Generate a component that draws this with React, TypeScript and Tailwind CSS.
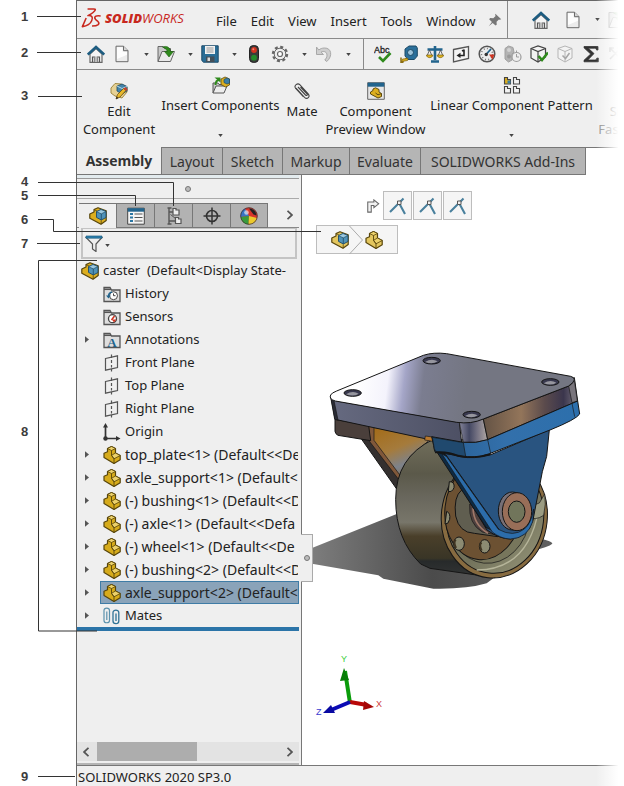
import React from "react";
import { clsx } from "clsx";

type Glyph = () => React.ReactElement;

function Svg({ children, size = "size-[18px]" }: { children: React.ReactNode; size?: string }) {
  return (
    <svg viewBox="0 0 18 18" className={clsx("block shrink-0", size)} fill="none" aria-hidden="true">
      {children}
    </svg>
  );
}

/* ---------- toolbar glyphs ---------- */

const Home: Glyph = () => (
  <Svg>
    <path d="M3 9 9 3.5 15 9v8.3H3z" fill="#f4f4f4" stroke="#666" strokeWidth="1.2" />
    <path d="M5.5 17v-5h2v5M10.500 17v-5h2v5" stroke="#555" strokeWidth="1.2" />
    <path d="M7.500 11.500h3v5.500h-3z" fill="#bbb" />
    <path d="M.8 9.600 9 2l8.200 7.600" stroke="#1d5c80" strokeWidth="2.600" />
  </Svg>
);
const Doc: Glyph = () => (
  <Svg>
    <path d="M3 1.200h7.500L15 5.700v11H3z" fill="#ececec" stroke="#6b6b6b" />
    <path d="M4 2.200h5.500v4.500H14v3L4 14z" fill="#fdfdfd" />
    <path d="M10.500 1.200v4.500H15" fill="#d6d6d6" stroke="#6b6b6b" />
  </Svg>
);
const Open: Glyph = () => (
  <Svg>
    <path d="M1 16.500V1.500h5l1.500 2h6v4" fill="#c9c9c9" stroke="#666" />
    <path d="M1 16.500 5 6.500h12.500l-4 10z" fill="#e9e9e9" stroke="#666" />
    <path d="M5.500 2c4-1.500 7.500 0 8 4.500h3L12 12 7.500 6.500h2.700C10 4.300 8 3.200 5.500 2z" fill="#2f8a1c" stroke="#1b5c0e" strokeWidth=".6" />
  </Svg>
);
const Save: Glyph = () => (
  <Svg>
    <path d="M.8.8h16.400v16.400H2.500L.8 15.500z" fill="#2a6d96" stroke="#1c4a68" />
    <path d="M4 1h10v8H4z" fill="#f2f2f2" />
    <path d="M5.500 3h7M5.500 5h7M5.500 7h7" stroke="#999" />
    <path d="M5 11.500h8.500V17H5z" fill="#444f58" />
    <path d="M6.500 12.500h2.500V16H6.500z" fill="#dadada" />
  </Svg>
);
const Traffic: Glyph = () => (
  <Svg>
    <rect x="4.500" y=".5" width="9" height="17" rx="4" fill="#3a3a3a" stroke="#222" />
    <circle cx="9" cy="5" r="2.900" fill="#d2331f" />
    <circle cx="9" cy="12.700" r="2.900" fill="#238a2a" />
    <circle cx="8.300" cy="4.300" r="1" fill="#f08a7a" />
  </Svg>
);
const Gear: Glyph = () => (
  <Svg>
    <circle cx="9" cy="9" r="7" stroke="#666" strokeWidth="2.400" strokeDasharray="3 2.500" />
    <circle cx="9" cy="9" r="5.800" fill="#ececec" stroke="#666" />
    <circle cx="9" cy="9" r="2.500" fill="#fff" stroke="#666" strokeWidth="1.200" />
  </Svg>
);
const Undo: Glyph = () => (
  <Svg>
    <path d="M1.500 2v7.500h7L6 7.200c3-1.700 6-.2 6 3 0 2-1 3.500-2.200 4.800l2 1.500C18 11 16.500 2.800 9.500 3 7 3 5.300 3.800 3.800 5z" fill="#cfcfcf" stroke="#a8a8a8" />
  </Svg>
);
const Spell: Glyph = () => (
  <Svg>
    <text x="0" y="8" fontSize="9" fontFamily="Liberation Sans, Arial, sans-serif" fill="#222" stroke="#222" strokeWidth=".3">Abc</text>
    <path d="m5 12 4 4 7.500-8" stroke="#2f8a1c" strokeWidth="2.600" />
  </Svg>
);
const Tape: Glyph = () => (
  <Svg>
    <path d="M5 4 9 1h7l1.300 2v8l-3 3.500H8L5 11z" fill="#2b6f9a" stroke="#1d4a66" />
    <circle cx="10.500" cy="7.500" r="3" fill="#9cc3da" stroke="#1d4a66" />
    <path d="M7 13 2 17M1 12.500v5h2.500" stroke="#8a6d12" strokeWidth="1.500" />
    <path d="m8 13.500-5.500.5-1 2.500 6-1z" fill="#e1b51c" stroke="#7c6010" strokeWidth=".7" />
  </Svg>
);
const Scales: Glyph = () => (
  <Svg>
    <path d="M9 1v14M1.500 4.500h15M5 16.500h8" stroke="#22648d" strokeWidth="2.600" />
    <path d="m3.500 5-2.500 6M3.500 5 6 11M14.500 5 12 11M14.500 5l2.500 6" stroke="#555" strokeWidth=".9" />
    <path d="M.5 10h6.300c0 3.500-6.300 3.500-6.300 0zM11.200 10h6.300c0 3.500-6.300 3.500-6.300 0z" fill="#e1b51c" stroke="#7c6010" strokeWidth=".7" />
  </Svg>
);
const Section: Glyph = () => (
  <Svg>
    <path d="M1.500 4.500 16.500 1.500v12l-15 3.500z" fill="#f3f3f3" stroke="#555" strokeWidth="1.300" />
    <path d="M12 4.500v6H7M12 5l-2 1" stroke="#222" strokeWidth="1.600" />
    <path d="m8.500 7.800-4 2.800 4 2.500z" fill="#222" />
  </Svg>
);
const Gauge: Glyph = () => (
  <Svg>
    <circle cx="9" cy="9" r="7.800" fill="#ececec" stroke="#555" strokeWidth="1.500" />
    <circle cx="9" cy="9" r="5.600" stroke="#777" strokeWidth="1.500" strokeDasharray="1 2.200" />
    <path d="m8 9.500 5-5.500" stroke="#22648d" strokeWidth="1.800" />
    <path d="M11 9.500h5.500l-2 5z" fill="#cf3320" />
    <circle cx="8.200" cy="9.500" r="1.700" fill="#333" />
  </Svg>
);
const GreyTimer: Glyph = () => (
  <Svg>
    <path d="M1 3.500 4.500 1 9 2.500 10 7l-2 2v6l-3.500 2L1 14z" fill="#b3b3b3" stroke="#a0a0a0" />
    <circle cx="5" cy="5" r="2" fill="#d2d2d2" />
    <circle cx="5" cy="11.500" r="2" fill="#999" />
    <circle cx="12.500" cy="12" r="4.500" fill="#eee" stroke="#9c9c9c" strokeWidth="1.200" />
    <path d="M12.500 9v3h2.500M12.500 5.500v2" stroke="#9c9c9c" />
  </Svg>
);
const CubeCheck: Glyph = () => (
  <Svg>
    <path d="m1 3.500 7-2.500 7.500 2.500V12L8 17 1 13z" fill="#f3f3f3" stroke="#444" strokeWidth="1.200" />
    <path d="M1 3.500 8 6.500l7.500-3M8 6.500V17" stroke="#444" strokeWidth="1.200" />
    <path d="m8.500 11 3.500 4L18 7.500" stroke="#2f8a1c" strokeWidth="2.600" />
  </Svg>
);
const CubeGrey: Glyph = () => (
  <Svg>
    <path d="m2 3.500 7-2.500 7 2.500V13l-7 4-7-4z" fill="#f3f3f3" stroke="#b5b5b5" />
    <path d="m2 3.500 7 3 7-3M9 6.500V17" stroke="#b5b5b5" />
    <path d="m6.500 10.500 3 3 4-5.500" stroke="#a5a5a5" strokeWidth="1.500" />
  </Svg>
);
const SigmaIcon: Glyph = () => (
  <Svg>
    <path d="M16 5V1.500H2v1.300L8.700 9 2 15.300v1.500h14.300V13l-1.500.2c-.3 1.300-.8 1.800-2.300 1.800H5.800L12 8.600 6.300 3.200h6.200c1.500 0 1.900.6 2 1.800z" fill="#333" stroke="#333" strokeWidth=".8" />
  </Svg>
);
const Cross: Glyph = () => (
  <Svg>
    <path d="m2 3 11 11M13 3 2 14M2 7V3h4M9 3h4v4" stroke="#bdbdbd" strokeWidth="1.600" />
  </Svg>
);
const Pin: Glyph = () => (
  <Svg size="size-3.5">
    <path d="m9.500 1 7.500 7-2 .8-1-.6-3 3 .2 4-1.500 1L6 12.800 1 17l4-5.500L1.500 8l1.300-1.500 4 .2 3-3-.6-1z" fill="#777" />
  </Svg>
);

/* ---------- part and assembly glyphs ---------- */

function Part({ tint = "#d6ab1b", line = "#57450b" }: { tint?: string; line?: string }) {
  return (
    <Svg>
      <path d="M1 7.300 4.500 5.800V2.500l4-2 4 2V7l4.700 2.500v4.200l-6.200 3.800L1 11.500z" fill={tint} stroke={line} strokeWidth="1.200" strokeLinejoin="round" />
      <path d="m4.500 2.500 4 2 4-2-4-2z" fill="#ecd16a" stroke={line} strokeWidth=".8" />
      <path d="M11 12.800 17.200 9.500 12.500 7 8.500 9.300z" fill="#ecd16a" stroke={line} strokeWidth=".8" />
      <path d="M8.500 4.500v4.800l2.500 3.500v4.700" stroke={line} strokeWidth=".9" />
    </Svg>
  );
}
function Assembly({ tint = "#dcae1f" }: { tint?: string }) {
  return (
    <Svg>
      <path d="M.8 7 5 5V2.500l4-1.800 8.200 3.100v9.700L12 17.300.8 11.300z" fill={tint} stroke="#57450b" strokeWidth="1.200" strokeLinejoin="round" />
      <path d="M5 2.500 8 4" stroke="#57450b" strokeWidth=".8" />
      <path d="M7.500 4.700 12 2.500l5 2v6L12.300 13l-4.800-2.600z" fill="#4f92b8" stroke="#1d4a66" strokeWidth=".9" />
      <path d="m7.500 4.700 4.800 2.200L17 4.500l-5-2z" fill="#9cc8df" stroke="#1d4a66" strokeWidth=".7" />
      <path d="M12.300 6.900V13" stroke="#1d4a66" strokeWidth=".8" />
      <path d="M12.200 13.500v3.500" stroke="#57450b" strokeWidth=".8" />
    </Svg>
  );
}
const PlainPart: Glyph = () => <Part />;
const PlainAssembly: Glyph = () => <Assembly />;

/* ---------- command manager glyphs ---------- */

const EditComp: Glyph = () => (
  <Svg>
    <path d="M1 6 5 1.500l6 .5 6 3v5l-5 6-7-2-4-3z" fill="#e6d194" stroke="#a08a45" />
    <path d="m7 4 5-2 5 2.500v4.500l-5 3-5-3z" fill="#4484a9" stroke="#1d4a66" strokeWidth=".8" />
    <path d="m7 4 5 2.500 5-2" stroke="#b5d8e8" />
    <path d="m6 17 1.500-4.500 6-6L16 8.500l-6 6.500z" fill="#e9b92a" stroke="#6a4e12" strokeWidth=".8" />
    <path d="m13.500 6.500 2-1.500 2 2.500-1.500 1.500z" fill="#c8402c" />
    <path d="m6 17 .8-2.300 1.700 1.400z" fill="#222" />
  </Svg>
);
const InsertComp: Glyph = () => (
  <Svg>
    <path d="M1 17V7h5l1 1.500h6V11" fill="#c9c9c9" stroke="#555" />
    <path d="m1 17 3-7h11l-3 7z" fill="#ededed" stroke="#555" />
    <path d="M3.500 9C3.500 5 5 4 7.500 4" stroke="#2f8a1c" strokeWidth="2" />
    <path d="M2.500 1.500h6v5z" fill="#2f8a1c" />
    <path d="m9 3 4-2 4.500 2v6L13.500 11 9 8.500z" fill="#dcae1f" stroke="#5f4b0c" strokeWidth=".8" />
    <path d="m12 3.500 3-1.500 2.500 1v4L15 8l-3-1.500z" fill="#3b7ea6" stroke="#1d4a66" strokeWidth=".7" />
  </Svg>
);
const Clip: Glyph = () => (
  <Svg>
    <path d="m3 6 8.500 9.300c2.800 2.700 6-.6 3.700-3.500L7 2.800C4.500.5.5 3.500 2.700 6.500l7.600 8M5 5l7.500 8c1.200 1 2.300 0 1.500-1.200L7.500 5" stroke="#444" strokeWidth="1.100" />
  </Svg>
);
const Preview: Glyph = () => (
  <Svg>
    <path d="M.7.700h16.600v16.600H.7z" fill="#e6e6e6" stroke="#666" />
    <path d="M.7.700h16.600v4H.7z" fill="#22648d" />
    <path d="m3.500 10 2.500-1.500V7L8.500 5.800 12 7.500v2.500l2.500 1.500v3L11 16l-7.500-4z" fill="#dcae1f" stroke="#5f4b0c" />
    <path d="m8.500 11 2.500 1.800 3.500-1.300" stroke="#5f4b0c" />
  </Svg>
);
const Pattern: Glyph = () => (
  <Svg>
    {[[1, 1], [10, 1], [1, 10], [10, 10]].map(([x, y]) => (
      <g key={`${x}-${y}`} transform={`translate(${x} ${y})`}>
        <path d="M.5.5h3v2h3v4.500h-6z" fill={x === 1 && y === 1 ? "#dcae1f" : "#f2f2f2"} stroke="#444" strokeWidth="1.100" />
        {x === 1 && y === 1 && <path d="M3.500 3.500h3v3h-3z" fill="#3b7ea6" />}
      </g>
    ))}
  </Svg>
);

/* ---------- feature manager glyphs ---------- */

const PropList: Glyph = () => (
  <Svg>
    <path d="M.7 1.200h16.600v16H.7z" fill="#f6f6f6" stroke="#444" />
    <path d="M.7 1.200h16.600v3.500H.7z" fill="#22648d" />
    <path d="M3 7h3M3 10.500h3M3 14h3" stroke="#2b76a3" strokeWidth="2.200" />
    <path d="M7.500 7h8M7.500 10.500h8M7.500 14h8" stroke="#555" strokeWidth="1.200" />
  </Svg>
);
const Config: Glyph = () => (
  <Svg>
    <path d="M4 1v16M4 5h4M4 14h7M2.500 1h4M2.500 17h4" stroke="#555" strokeWidth="1.400" />
    <path d="M8 1.500h3v1.500h3V8H8zM10.500 10.500h3V12H16v4.500h-5.500z" fill="#eee" stroke="#555" strokeWidth="1.200" />
    <path d="m5.500 7.500 5 4" stroke="#555" />
  </Svg>
);
const Target: Glyph = () => (
  <Svg>
    <circle cx="9" cy="9" r="5.500" stroke="#333" strokeWidth="1.600" />
    <path d="M9 .5v17M.5 9h17" stroke="#333" strokeWidth="1.500" />
  </Svg>
);
const Ball: Glyph = () => (
  <Svg>
    <circle cx="9" cy="9" r="8.500" fill="#d8352b" />
    <path d="M9 9 .6 10A8.500 8.500 0 0 1 5 1.500z" fill="#3a73c4" />
    <path d="M9 9 .6 10a8.500 8.500 0 0 0 8 7.500z" fill="#3a9b3c" />
    <path d="M9 9 8.600 17.500A8.500 8.500 0 0 0 17 11z" fill="#ecc92d" />
    <path d="M9 1.500c4 0 7 2.500 7.500 7l-3-1z" fill="#222" />
    <circle cx="6.500" cy="5.500" r="2.300" fill="#fff" opacity=".6" />
    <circle cx="9" cy="9" r="8.300" stroke="#333" strokeWidth=".7" />
  </Svg>
);
function Folder({ children }: { children: React.ReactNode }) {
  return (
    <Svg>
      <path d="M1 16.500v-14h6L8.500 5H17v11.500z" fill="#dedede" stroke="#555" strokeWidth="1.300" />
      <path d="M1 4.300h7" stroke="#555" strokeWidth="1.500" />
      {children}
    </Svg>
  );
}
const History: Glyph = () => (
  <Folder>
    <circle cx="10.500" cy="10.700" r="4" fill="#fff" stroke="#444" />
    <path d="M10.500 8.500v2.200h2" stroke="#444" />
    <path d="m3 10.500 2.500 3 2.300-3z" fill="#22648d" />
    <path d="M5.500 11.500c0-2.500 1.500-4 3.500-4.500" stroke="#22648d" strokeWidth="1.500" />
  </Folder>
);
const Sensors: Glyph = () => (
  <Folder>
    <circle cx="9.500" cy="10.700" r="4" fill="#fff" stroke="#444" strokeWidth="1.300" />
    <path d="M9 11.500h4.500l-2.500 3z" fill="#cf3320" />
    <path d="m8.500 12 3-4" stroke="#cf3320" strokeWidth="1.500" />
  </Folder>
);
const Annotations: Glyph = () => (
  <Folder>
    <text x="9" y="15.500" textAnchor="middle" fontSize="13" fontWeight="700" fontFamily="Liberation Serif, serif" fill="#22648d">A</text>
  </Folder>
);
const Plane: Glyph = () => (
  <Svg>
    <path d="M2.500 4.500 14.500 1.800v11.700l-12 2.700z" stroke="#555" strokeWidth="1.200" />
    <path d="M8.500.5v3.500M8.500 6v3M8.500 11v2.500M8.500 15v2.500" stroke="#555" strokeWidth="1.200" />
  </Svg>
);
const Origin: Glyph = () => (
  <Svg>
    <path d="M2.500 3v12.500H13" stroke="#333" strokeWidth="1.700" />
    <path d="M2.500 0 5 4.500H0zM17.500 15.500l-4.500 2.500v-5z" fill="#333" />
    <circle cx="2.500" cy="15.500" r="2.200" fill="#333" />
  </Svg>
);
const Mates: Glyph = () => (
  <Svg>
    <path d="M1 5v8.500c0 3 5.500 3 5.500 0V3.500C6.500.3 1 .3 1 3.500V5M3.800 4.500V13" stroke="#5c92ad" strokeWidth="1.200" />
    <path d="M10 7v7c0 3.500 5.800 3.500 5.800 0V5.500c0-3.300-5.800-3.300-5.800 0V7M13 6.500V14" stroke="#2f7295" strokeWidth="1.300" />
  </Svg>
);

/* ---------- small shared pieces ---------- */

function Caret() {
  return (
    <svg viewBox="0 0 6 4" className="block h-[3px] w-[5px]" aria-hidden="true">
      <path d="M0 0h6L3 4z" fill="#444" />
    </svg>
  );
}
function Tool({ icon: I, label, dim }: { icon: Glyph; label: string; dim?: boolean }) {
  return (
    <button type="button" aria-label={label} className={clsx("flex h-full w-[26px] shrink-0 items-center justify-center", dim && "opacity-50")}>
      <I />
    </button>
  );
}
function Drop({ label }: { label: string }) {
  return (
    <button type="button" aria-label={label} className="flex h-full w-[18px] shrink-0 items-center justify-center pl-1">
      <Caret />
    </button>
  );
}

function Logo() {
  return (
    <div className="flex w-[110px] items-center gap-1 text-[#c8281e]">
      <svg viewBox="0 0 58 58" className="size-5 shrink-0" fill="none" stroke="currentColor" strokeWidth="4.500" strokeLinejoin="round" aria-hidden="true">
        <path d="M19 3h18q10 0-2 10-6 5-15 9 18-1 11 15-6 14-27 17l11-25" />
        <path d="M57 23q-15-2-17 4-1 5 9 12 5 5 1 9-5 4-18 4" />
      </svg>
      <span className="font-['Open_Sans',sans-serif] text-[13px] italic leading-4">
        <b className="font-extrabold">SOLID</b>WORKS
      </span>
    </div>
  );
}

const menus = ["File", "Edit", "View", "Insert", "Tools", "Window"];

function MenuBar() {
  return (
    <header className="flex h-[38px] shrink-0 items-center border-b border-[#8a8a8a] pl-1">
      <div className="-mt-1">
        <Logo />
      </div>
      <nav className="ml-[25px] mt-1 flex gap-3.5">
        {menus.map((m) => (
          <button type="button" key={m}>{m}</button>
        ))}
      </nav>
      <button type="button" aria-label="Pin menu" className="ml-3 w-4 shrink-0">
        <Pin />
      </button>
      <div className="ml-auto flex h-full w-[117px] shrink-0 items-center border-l border-[#8a8a8a] pl-5">
        <Tool icon={Home} label="Home" />
        <div className="w-1.5 shrink-0" />
        <Tool icon={Doc} label="New" />
        <Drop label="New options" />
        <Tool icon={Open} label="Open" dim />
      </div>
    </header>
  );
}

function QuickBar() {
  return (
    <div className="flex h-[31px] shrink-0 items-center overflow-hidden border-b border-[#8a8a8a] pl-1.5">
      <Tool icon={Home} label="Welcome" />
      <Tool icon={Doc} label="New document" />
      <Drop label="New document options" />
      <Tool icon={Open} label="Open document" />
      <Drop label="Open document options" />
      <Tool icon={Save} label="Save" />
      <Drop label="Save options" />
      <Tool icon={Traffic} label="Rebuild" />
      <Tool icon={Gear} label="Options" />
      <Drop label="Options list" />
      <Tool icon={Undo} label="Undo" />
      <Drop label="Undo list" />
      <div className="ml-2 mr-1.5 h-full w-px shrink-0 bg-[#8a8a8a]" />
      <Tool icon={Spell} label="Spell check" />
      <Tool icon={Tape} label="Measure" />
      <Tool icon={Scales} label="Mass properties" />
      <Tool icon={Section} label="Section properties" />
      <Tool icon={Gauge} label="Performance evaluation" />
      <Tool icon={GreyTimer} label="Assembly evaluation" />
      <Tool icon={CubeCheck} label="Check" />
      <Tool icon={CubeGrey} label="Compare" />
      <Tool icon={SigmaIcon} label="Equations" />
      <Tool icon={Cross} label="Deviation" />
    </div>
  );
}

function Command({ icon: I, lines, width, drop }: { icon: Glyph; lines: string[]; width: string; drop?: boolean }) {
  return (
    <button type="button" className={clsx("flex h-full shrink-0 flex-col items-center whitespace-nowrap leading-[18px]", width, drop ? "pt-1.5" : "pt-3")}>
      <I />
      <span className="mt-0.5 flex flex-col items-center">
        {lines.map((l) => (
          <span key={l}>{l}</span>
        ))}
      </span>
      {drop && <span className="mt-5"><Caret /></span>}
    </button>
  );
}

function Ribbon() {
  return (
    <div className="flex h-[77px] shrink-0 overflow-hidden">
      <Command icon={EditComp} lines={["Edit", "Component"]} width="w-[84px]" />
      <Command icon={InsertComp} lines={["Insert Components"]} width="w-[119px]" drop />
      <Command icon={Clip} lines={["Mate"]} width="w-11" />
      <Command icon={Preview} lines={["Component", "Preview Window"]} width="w-[103px]" />
      <Command icon={Pattern} lines={["Linear Component Pattern"]} width="w-[169px]" drop />
      <div className="opacity-50">
        <Command icon={Doc} lines={["Smart", "Fasteners"]} width="w-16" />
      </div>
    </div>
  );
}

const tabs = [
  { name: "Layout", width: "w-[61px]" },
  { name: "Sketch", width: "w-[60px]" },
  { name: "Markup", width: "w-[67px]" },
  { name: "Evaluate", width: "w-[71px]" },
  { name: "SOLIDWORKS Add-Ins", width: "w-[166px]" },
];

function TabStrip() {
  return (
    <div role="tablist" className="flex h-7 shrink-0 bg-white text-[14px] text-[#333]">
      <button role="tab" aria-selected="true" type="button" className="w-[84px] border-b border-[#777] bg-[#efefef] font-['Open_Sans',sans-serif] font-bold">
        Assembly
      </button>
      <div className="flex flex-1 border-t border-[#777]">
        {tabs.map((t) => (
          <button key={t.name} role="tab" aria-selected="false" type="button" className={clsx("whitespace-nowrap border-b border-l border-[#777] bg-[#b5b5b5] last:border-r", t.width)}>
            {t.name}
          </button>
        ))}
      </div>
    </div>
  );
}

interface Node { label: string; icon: Glyph; open?: boolean; selected?: boolean }

const nodes: Node[] = [
  { label: "History", icon: History },
  { label: "Sensors", icon: Sensors },
  { label: "Annotations", icon: Annotations, open: true },
  { label: "Front Plane", icon: Plane },
  { label: "Top Plane", icon: Plane },
  { label: "Right Plane", icon: Plane },
  { label: "Origin", icon: Origin },
  { label: "top_plate<1> (Default<<De", icon: PlainPart, open: true },
  { label: "axle_support<1> (Default<", icon: PlainPart, open: true },
  { label: "(-) bushing<1> (Default<<D", icon: PlainPart, open: true },
  { label: "(-) axle<1> (Default<<Defa", icon: PlainPart, open: true },
  { label: "(-) wheel<1> (Default<<De", icon: PlainPart, open: true },
  { label: "(-) bushing<2> (Default<<D", icon: PlainPart, open: true },
  { label: "axle_support<2> (Default<", icon: PlainPart, open: true, selected: true },
  { label: "Mates", icon: Mates, open: true },
];

const panes: { label: string; icon: Glyph }[] = [
  { label: "FeatureManager", icon: PlainAssembly },
  { label: "PropertyManager", icon: PropList },
  { label: "ConfigurationManager", icon: Config },
  { label: "DimXpertManager", icon: Target },
  { label: "DisplayManager", icon: Ball },
];

function Chevron({ left }: { left?: boolean }) {
  return (
    <svg viewBox="0 0 6 10" className="block h-2.5 w-1.5" fill="none" stroke="#555" strokeWidth="1.800" aria-hidden="true">
      <path d={left ? "M5.500.8 1 5l4.500 4.200" : "M.5.8 5 5 .5 9.200"} />
    </svg>
  );
}

function TreePanel() {
  return (
    <aside className="flex w-[225px] shrink-0 flex-col border-r border-[#777] pr-0.5">
      <div className="h-1 shrink-0 border-b border-[#999] bg-[#e3ebee]" />
      <div className="flex h-5 shrink-0 items-center justify-center border-b border-[#aaa]">
        <span className="size-1.5 rounded-full border border-[#777] bg-[#bbb]" />
      </div>
      <div className="mt-1 flex h-[25px] shrink-0 border-b border-[#888] pl-0.5">
        {panes.map((p, i) => (
          <button
            type="button"
            key={p.label}
            aria-label={p.label}
            className={clsx("flex h-[25px] items-center justify-center border-t border-[#777]", i === 0 ? "w-[37px] bg-[#efefef]" : "w-[38px] border-b border-l bg-[#b2b2b2]", i === 4 && "border-r")}
          >
            <p.icon />
          </button>
        ))}
        <button type="button" aria-label="More panes" className="flex flex-1 items-center justify-center pl-3">
          <Chevron />
        </button>
      </div>
      <div className="ml-1 mr-0.5 flex h-[31px] shrink-0 items-center gap-0.5 border-2 border-t border-[#c4c4c4] px-0.5">
        <button type="button" aria-label="Filter" className="flex items-center gap-0.5">
          <Svg>
            <path d="M1 3.500h16L11 10v7.500L7.500 15v-5z" fill="#eee" stroke="#555" strokeWidth="1.200" />
            <path d="M1 2h16v2.200H1z" fill="#2b7fae" stroke="#1d5c80" strokeWidth=".7" />
          </Svg>
          <span className="mt-1"><Caret /></span>
        </button>
        <input aria-label="Filter tree" className="h-5 min-w-0 flex-1 bg-transparent outline-none" />
      </div>
      <ul role="tree" className="overflow-hidden whitespace-nowrap text-[13px] leading-[23px]">
        <li role="treeitem" className="flex h-[23px] items-center gap-1 pl-1">
          <PlainAssembly />
          <span className="whitespace-pre">caster  (Default&lt;Display State-</span>
        </li>
        {nodes.map((n) => (
          <li role="treeitem" key={n.label} className="flex h-[23px] items-center pl-2">
            <span className="w-[15px] shrink-0">
              {n.open && (
                <svg viewBox="0 0 5 8" className="h-[7px] w-1" aria-hidden="true">
                  <path d="M0 0v8l5-4z" fill="#555" />
                </svg>
              )}
            </span>
            <span className={clsx("flex h-full min-w-0 flex-1 items-center gap-1 overflow-hidden border pl-0.5", n.selected ? "border-[#3f7ca6] bg-[#8aa3b9]" : "border-transparent")}>
              <n.icon />
              <span className={n.icon === PlainPart ? "text-[14px]" : undefined}>{n.label}</span>
            </span>
          </li>
        ))}
      </ul>
      <div className="h-1 shrink-0 bg-[#2b74a8]" />
      <div className="flex-1" />
      <div className="flex h-[19px] shrink-0 items-center justify-between bg-[#e3e3e3] pl-1.5 pr-1.5">
        <button type="button" aria-label="Scroll left"><Chevron left /></button>
        <div className="ml-2 h-full w-[100px] bg-[#adadad]" />
        <div className="flex-1" />
        <button type="button" aria-label="Scroll right"><Chevron /></button>
      </div>
      <div className="mt-0.5 h-0.5 shrink-0 bg-[#b5b5b5]" />
    </aside>
  );
}

function MateButton({ n }: { n: number }) {
  return (
    <button type="button" aria-label={`Mate ${n}`} className="flex size-[29px] items-center justify-center border border-[#bdbdbd] bg-[#f5f5f5]">
      <Svg>
        <path d="M1 15 14.500 1.500M9.500 5l6.500 12" stroke="#49809d" strokeWidth="2.100" />
        <path d="M8.500 4h3.500v3.500H8.500z" fill="#eee" stroke="#555" />
      </Svg>
    </button>
  );
}

function Caster() {
  return (
    <svg viewBox="6 0 966 780" className="block h-[260px] w-[322px]" aria-label="Caster model" role="img" stroke="#151515" strokeWidth="3" strokeLinejoin="round">
      <defs>
        <linearGradient id="shade" x1="0" x2="1"><stop offset="0" stopColor="#7d7d7d" /><stop offset=".5" stopColor="#4b4b4b" /><stop offset="1" stopColor="#606060" /></linearGradient>
        <linearGradient id="top" gradientUnits="userSpaceOnUse" x1="170" y1="115" x2="500" y2="155"><stop offset="0" stopColor="#fff" /><stop offset=".28" stopColor="#f4f3fc" /><stop offset=".43" stopColor="#a5a6c8" /><stop offset=".6" stopColor="#7b7d90" /><stop offset="1" stopColor="#747682" /></linearGradient>
        <linearGradient id="front" x1="0" x2="1"><stop offset="0" stopColor="#666a80" /><stop offset="1" stopColor="#4d5064" /></linearGradient>
        <linearGradient id="corner" x1="0" x2="1"><stop offset="0" stopColor="#85859a" /><stop offset=".35" stopColor="#444863" /><stop offset=".65" stopColor="#777484" /><stop offset="1" stopColor="#b1a8a4" /></linearGradient>
        <linearGradient id="side" x1="0" x2="1"><stop offset="0" stopColor="#645345" /><stop offset=".4" stopColor="#93755a" /><stop offset=".65" stopColor="#5b4b4c" /><stop offset=".85" stopColor="#3b364d" /><stop offset="1" stopColor="#77717c" /></linearGradient>
        <linearGradient id="tread" x1="0" y1="0" x2="0" y2="1"><stop offset="0" stopColor="#716e5b" /><stop offset=".25" stopColor="#5b594a" /><stop offset=".42" stopColor="#69675d" /><stop offset=".6" stopColor="#78766a" /><stop offset=".7" stopColor="#4a3f2a" /><stop offset=".86" stopColor="#393526" /><stop offset=".88" stopColor="#272a2b" /><stop offset="1" stopColor="#333534" /></linearGradient>
        <linearGradient id="tan" x1="0" y1="0" x2=".5" y2="1"><stop offset="0" stopColor="#a36a15" /><stop offset=".5" stopColor="#a57b3c" /><stop offset=".8" stopColor="#7d828b" /><stop offset="1" stopColor="#85745b" /></linearGradient>
        <linearGradient id="inner" x1="0" y1="0" x2="1" y2="1"><stop offset="0" stopColor="#5f5a45" /><stop offset=".6" stopColor="#73735c" /><stop offset="1" stopColor="#98977a" /></linearGradient>
        <linearGradient id="flange" x1="0" x2="1"><stop offset="0" stopColor="#285d91" /><stop offset=".5" stopColor="#3370ab" /><stop offset="1" stopColor="#2c6fac" /></linearGradient>
      </defs>
      <path d="M36 624 290 522l180 80 235-8q52 8 52 17-10 10-66 22L560 730q-60 18-160 16l-150-30-15-10L36 671z" fill="url(#shade)" stroke="none" />
      <path d="m185 298 35 0 82 114-12 35z" fill="#34302f" />
      <path d="M212 260 395 295 330 350 302 415l-84-112z" fill="url(#tan)" />
      <path d="m206 258 16 1v42l82 110-6 10L206 301z" fill="#80583a" strokeWidth="2" />
      <path d="M400 298q-113 54-113 180 0 121 75 194l28 13 195 28 60-240L540 300z" fill="url(#tread)" />
      <g transform="rotate(6 583 530)">
        <ellipse cx="583" cy="530" rx="159" ry="184" fill="#876b40" />
        <ellipse cx="585" cy="530" rx="146" ry="170" fill="url(#inner)" />
        <ellipse cx="566" cy="521" rx="124" ry="151" fill="#77765c" strokeWidth="2" />
        <ellipse cx="548" cy="515" rx="115" ry="148" fill="#6c5132" />
      </g>
      <path d="M530 690q160 0 188-195" fill="none" stroke="#b6b59a" strokeWidth="4" />
      <path d="M718 489q-30 6-34 42 22 12 47-5 8-35 3-64z" fill="#9b9c82" strokeWidth="2" />
      <g fill="#8c8b72">
        <path d="M448 425q17 0 14 18-6 15-17 11zM440 514q12 5 9 24-4 16-14 14z" />
        <ellipse cx="477" cy="611" rx="16" ry="20" />
        <ellipse cx="554" cy="619" rx="16" ry="20" />
      </g>
      <path d="M468 600q-9 5 0 24M545 608q-9 5 0 24" fill="none" stroke="#403522" strokeWidth="6" />
      <path d="M485 450q-25 20-18 78 10 50 56 52l70 10-60-105z" fill="#605e50" />
      <path d="M509 492q-4 60 38 84l45 10-65-90z" fill="#4e413f" strokeWidth="2" />
      <path d="M519 505q2 50 45 75" fill="none" stroke="#a17869" strokeWidth="5" />
      <path d="M105 238 206 257l6 45-98-16q-8-4-9-12z" fill="#4a3f3b" />
      <path d="M92 168 105 238l270 58 110 12-7-61L110 183z" fill="url(#front)" />
      <path d="M376 288 398 291v13l-24-4z" fill="#b9782e" strokeWidth="2" />
      <path d="m92 172 12 66 10 2-12-58z" fill="#292b35" strokeWidth="2" />
      <path d="M478 247 490 307q38 4 73-8L550 237q-35 12-72 10z" fill="url(#corner)" strokeWidth="2" />
      <path d="M550 237 806 138q17-9 17-25l10 70-270 116z" fill="url(#side)" />
      <path d="m806 138 10 50 16-5-10-70q0 18-16 25z" fill="#79757c" strokeWidth="2" />
      <path d="M92 165q-6 12 14 18l364 64q44 6 80-10l256-99q31-22 6-29L440 41q-40-5-70 5L110 153q-16 6-18 12z" fill="url(#top)" />
      {[[395, 62], [751, 126], [158, 159], [515, 224]].map(([x, y]) => (
        <g key={x}>
          <ellipse cx={x} cy={y} rx="26" ry="10" fill="#38384e" />
          <path d={`M${x - 20} ${y + 4}q20-13 38-2-15 10-38 2`} fill="#96969e" stroke="none" />
        </g>
      ))}
      <path d="m418 335 62 15q42 8 90-5l178-76-8 80-13 46-28 145q-15 53-68 57-32 0-70-27z" fill="#295480" />
      <path d="m410 335 28 10 160 225q-17 7-40-8z" fill="#0e2a43" />
      <path d="m426 342 14 8 155 218q45 25 78-1 20-15 28-60l-3 38q-16 50-67 52-29-1-54-21z" fill="#2c6dab" strokeWidth="2" />
      <path d="M395 290 490 307q38 4 73-8L833 183l6 39q-10 16-89 48L566 342q-41 14-86 5l-74-10q-3-3-5-20z" fill="url(#flange)" />
      <path d="M397 292 490 308l7 41-84-13q-9-2-10-10z" fill="#20496e" strokeWidth="2" />
      <path d="m563 299 9 41M816 190l8 40" fill="none" strokeWidth="2" />
      <path d="M405 337q40-3 70 11 50 10 97-6" fill="none" strokeWidth="5" />
      <ellipse cx="637" cy="513" rx="42" ry="57" fill="#766f76" />
      <ellipse cx="651" cy="515" rx="44" ry="57" fill="#986e58" />
      <ellipse cx="650" cy="515" rx="25" ry="32" fill="#71755b" />
    </svg>
  );
}

function Triad() {
  return (
    <svg viewBox="0 0 72 68" className="block h-[68px] w-[72px]" role="img" aria-label="Axes" fontFamily="Liberation Sans, Arial, sans-serif" fontSize="9">
      <path d="M36 52 31 20" stroke="#0a9c0a" strokeWidth="4" />
      <path d="m30 17-4 13 9-1z" fill="#077d07" />
      <path d="m36 51 17 3" stroke="#b80808" strokeWidth="4" />
      <path d="m60 56-10-6-1 9z" fill="#a50707" />
      <path d="m36 51-19 8" stroke="#0b0bb5" strokeWidth="4" />
      <path d="m9 62 8-8 4 8z" fill="#0909a2" />
      <text x="27" y="11" fill="#3ccf3c">Y</text>
      <text x="62" y="56" fill="#d03a3a">X</text>
      <text x="2" y="64" fill="#3a3ad0">Z</text>
    </svg>
  );
}

function Viewport() {
  return (
    <main className="relative flex min-w-0 flex-1 flex-col bg-white pt-4">
      <div className="flex items-center gap-px pl-16">
        <svg viewBox="0 0 16 16" className="mr-0.5 size-3.5" fill="#f2f2f2" stroke="#666" strokeWidth="1.200" aria-hidden="true">
          <path d="M2 15V3.500h7V1l5.500 4.500L9 10V7.500H6V15z" />
        </svg>
        <MateButton n={1} />
        <MateButton n={2} />
        <MateButton n={3} />
      </div>
      <nav aria-label="Selection breadcrumbs" className="ml-3.5 mt-[5px] flex h-[29px] w-[82px] shrink-0 items-center border border-[#bdbdbd] bg-[#f5f5f5] pl-3.5">
        <button type="button" aria-label="caster"><Assembly tint="#e3c65e" /></button>
        <svg viewBox="0 0 14 28" className="h-7 w-3.5 shrink-0" fill="none" stroke="#aaa" aria-hidden="true">
          <path d="m.5 0 13 14-13 14" />
        </svg>
        <button type="button" aria-label="axle_support" className="ml-0.5"><Part tint="#e3c65e" /></button>
      </nav>
      <div className="mt-[86px] shrink-0">
        <Caster />
      </div>
      <div className="ml-3 mt-[51px] shrink-0">
        <Triad />
      </div>
      <button type="button" aria-label="Collapse panel" className="absolute -left-px top-[359px] flex h-12 w-3 items-center justify-center border border-l-0 border-[#aaa] bg-[#efefef]">
        <span className="size-1.5 rounded-full border border-[#777] bg-[#bbb]" />
      </button>
    </main>
  );
}

const callouts = [
  { n: 1, top: "top-[9px]" },
  { n: 2, top: "top-[45px]" },
  { n: 3, top: "top-[88px]" },
  { n: 4, top: "top-[174px]" },
  { n: 5, top: "top-[188px]" },
  { n: 6, top: "top-[212px]" },
  { n: 7, top: "top-[236px]" },
  { n: 8, top: "top-[424px]" },
  { n: 9, top: "top-[769px]" },
];

/* Numbered leaders drawn over the window. */
function Callouts() {
  return (
    <div className="pointer-events-none absolute inset-0">
      <svg viewBox="0 0 340 786" className="absolute left-0 top-0 h-[786px] w-[340px]" fill="none" stroke="#333" aria-hidden="true">
        <path d="M37 16.500h44M37 52.500h44M38 96.500h44M38 182.500h135.500V206M38 195.500h97.500V206M38 219.500h15.500v12H321M37 243.500h43M97 260.500H38.500v370.500H97M38 776.500h37" />
      </svg>
      {callouts.map((c) => (
        <span key={c.n} className={clsx("absolute left-[21px] font-['Liberation_Sans',Arial,sans-serif] text-[13px] font-bold leading-4 text-[#3c3c3c]", c.top)}>
          {c.n}
        </span>
      ))}
    </div>
  );
}

export default function App() {
  return (
    <div className="relative flex min-h-screen overflow-hidden bg-white pl-[76px] font-['Noto_Sans',sans-serif] text-[13px] text-[#222]">
      <div className="flex min-w-0 flex-1 flex-col border-l border-t border-[#666] bg-[#efefef]">
        <MenuBar />
        <QuickBar />
        <Ribbon />
        <TabStrip />
        <div className="flex flex-1">
          <TreePanel />
          <Viewport />
        </div>
        <footer className="h-[21px] shrink-0 border-t border-[#777] pl-px leading-[23px]">SOLIDWORKS 2020 SP3.0</footer>
      </div>
      <div className="pointer-events-none absolute inset-y-0 right-0 w-7 bg-gradient-to-r from-transparent to-white to-80%" />
      <Callouts />
    </div>
  );
}
